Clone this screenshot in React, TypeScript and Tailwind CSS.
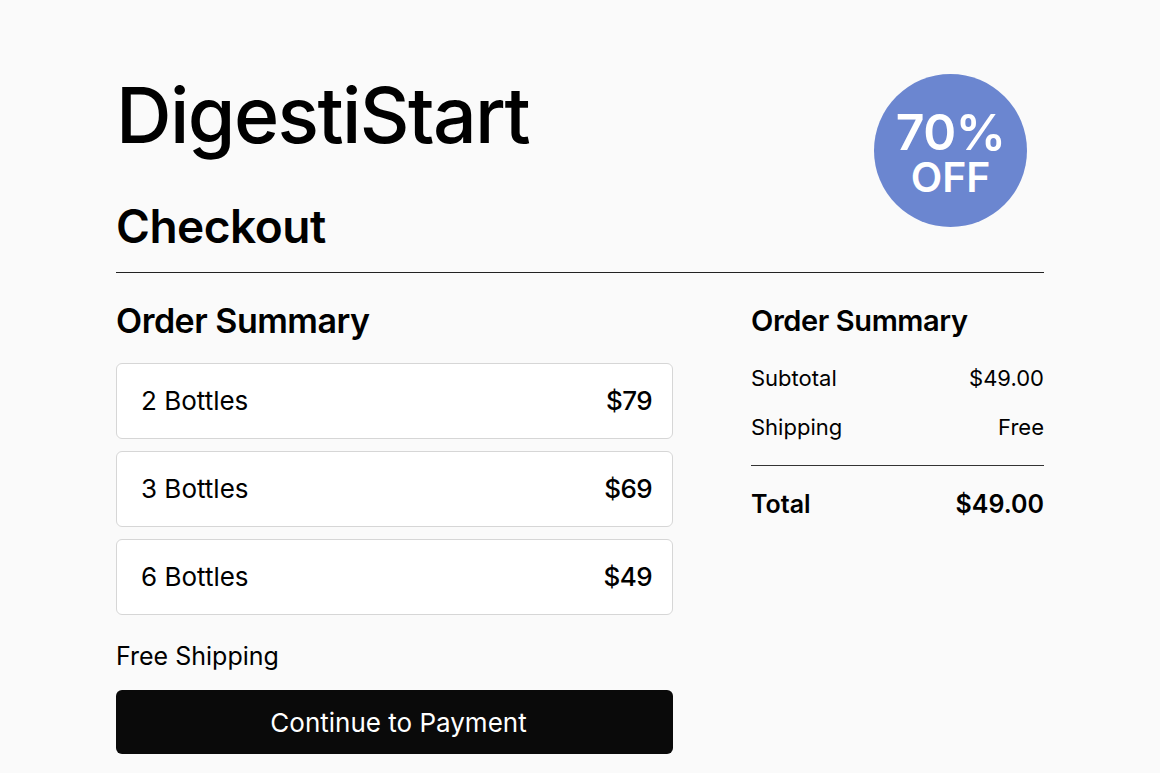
const OPTIONS = [
  { label: "2 Bottles", price: "$79" },
  { label: "3 Bottles", price: "$69" },
  { label: "6 Bottles", price: "$49" },
];

function OptionCard({ label, price }: { label: string; price: string }) {
  return (
    <div className="flex h-[76px] items-center justify-between rounded-[6px] border border-[#d6d6d6] bg-white pl-[24px] pr-[20px] text-[26px] leading-none text-black">
      <span>{label}</span>
      <span className="font-medium tracking-[-0.6px]">{price}</span>
    </div>
  );
}

function SummaryRow({ label, value }: { label: string; value: string }) {
  return (
    <div className="flex items-center justify-between text-[22px] leading-none text-black">
      <span>{label}</span>
      <span>{value}</span>
    </div>
  );
}

export default function App() {
  return (
    <div
      className="min-h-[773px] w-full bg-[#fafafa] px-[116px] pt-[72px] text-black"
      style={{ fontFamily: "Inter, 'Noto Sans', sans-serif" }}
    >
      <div className="flex items-start justify-between">
        <div className="flex flex-col">
          <h1 className="text-[77px] font-medium leading-[86px] tracking-[-1.6px]">
            DigestiStart
          </h1>
          <h2 className="mt-[42px] text-[46px] font-semibold leading-[52px] tracking-[-0.5px]">
            Checkout
          </h2>
        </div>
        <div className="mr-[17px] mt-[2px] flex h-[153px] w-[153px] flex-col items-center justify-center rounded-full bg-[#6b86d0] pt-[4px] text-white">
          <span className="text-[50px] font-semibold leading-[50px] tracking-[-0.5px]">70%</span>
          <span className="text-[41px] font-semibold leading-[41px]">OFF</span>
        </div>
      </div>

      <div className="mt-[20px] h-px w-full bg-[#222]" />

      <div className="mt-[28px] flex gap-[78px]">
        <div className="flex w-[557px] flex-col">
          <h3 className="text-[34px] font-semibold leading-[40px] tracking-[-0.5px]">
            Order Summary
          </h3>
          <div className="mt-[22px] flex flex-col gap-[12px]">
            {OPTIONS.map((o) => (
              <OptionCard key={o.label} label={o.label} price={o.price} />
            ))}
          </div>
          <p className="mt-[26px] text-[25px] leading-[30px]">Free Shipping</p>
          <button className="mt-[19px] h-[64px] w-full rounded-[6px] bg-[#0a0a0a] pl-[8px] text-[26px] text-white">
            Continue to Payment
          </button>
        </div>

        <div className="flex flex-1 flex-col">
          <h3 className="text-[29px] font-semibold leading-[40px] tracking-[-0.4px]">
            Order Summary
          </h3>
          <div className="mt-[26px] flex flex-col gap-[27px]">
            <SummaryRow label="Subtotal" value="$49.00" />
            <SummaryRow label="Shipping" value="Free" />
          </div>
          <div className="mt-[27px] h-px w-full bg-[#333]" />
          <div className="mt-[26px] flex items-center justify-between text-[25px] font-semibold leading-none">
            <span>Total</span>
            <span>$49.00</span>
          </div>
        </div>
      </div>
    </div>
  );
}
